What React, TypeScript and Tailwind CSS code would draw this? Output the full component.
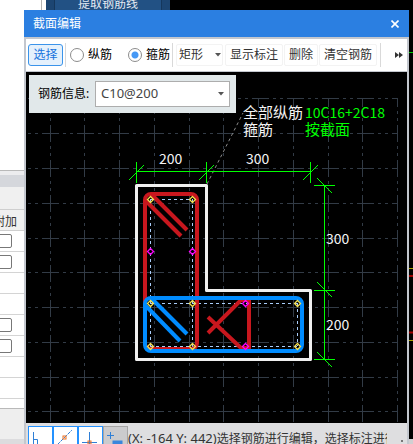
import { useState } from 'react';
import type { ReactNode } from 'react';

/* =========================
   Data
========================= */
const GRID_X = [50, 84, 119, 154, 189, 223, 258, 293, 328, 362, 397];
const GRID_Y = [98, 133, 168, 203, 238, 272, 307, 342, 377, 411];

const CORNER_BARS = [
  [150, 199], [192, 199],
  [150, 303], [192, 303], [297, 303],
  [150, 346], [192, 346], [297, 346],
];
const SIDE_BARS = [[150, 251], [192, 251], [245, 303], [245, 346]];

const ROWS = [true, true, false, false, true, true, false, false];

const UI_FONT = "font-['Noto_Sans','Noto_Sans_CJK_SC',sans-serif]";
const CJK_FONT = "font-['Noto_Sans_CJK_SC',sans-serif]";

/* =========================
   Section drawing
========================= */
function Bars({ at, color }: { at: number[][]; color: string }) {
  return (
    <g stroke={color} strokeWidth="1.3">
      {at.map(([x, y]) => (
        <path key={`${x}-${y}`} d={`M${x + 0.5} ${y - 2.5}l3 3l-3 3l-3 -3z`} />
      ))}
    </g>
  );
}

function SectionDrawing() {
  return (
    <svg
      viewBox="26 72 381 351"
      preserveAspectRatio="xMinYMin meet"
      className={`block h-full w-full ${CJK_FONT}`}
      fill="none"
    >
      {/* grid */}
      <g stroke="#323b46" strokeDasharray="17 4 3 4 3 4" shapeRendering="crispEdges">
        {GRID_Y.map((y) => (
          <path key={y} d={`M26 ${y + 0.5}H397`} strokeDashoffset="19" />
        ))}
        {GRID_X.map((x) => (
          <path key={x} d={`M${x + 0.5} 98V423`} strokeDashoffset="8" />
        ))}
      </g>

      {/* leader */}
      <path d="M207 184L243 113" stroke="#8c8c8c" strokeDasharray="3 3" />

      {/* concrete outline */}
      <path
        d="M136.5 185.5H206.5V290.5H310.5V359.5H136.5Z"
        stroke="#f0f0f0"
        strokeWidth="3"
        strokeLinejoin="round"
      />

      {/* bar centre lines */}
      <g stroke="#a9cdfa" strokeDasharray="3 3" shapeRendering="crispEdges">
        <path d="M150.5 199V346" />
        <path d="M192.5 199V346" />
        <path d="M297.5 303V346" />
        <path d="M150 199.5H192" />
        <path d="M150 303.5H297" />
        <path d="M150 346.5H297" />
      </g>

      {/* stirrups */}
      <g stroke="#c8171e" strokeWidth="4">
        <rect x="145" y="194" width="52" height="155" rx="6" />
        <path d="M146 201L181 236" />
        <path d="M151 194L187 230" />
        <path d="M208 333L241 300H249V348H241L208 317" />
      </g>
      <g stroke="#008cff" strokeWidth="4">
        <rect x="145" y="298" width="157" height="53" rx="6" />
        <path d="M146 306L180 341" />
        <path d="M151 298L187 334" />
      </g>

      {/* longitudinal bars */}
      <Bars at={CORNER_BARS} color="#f5e050" />
      <Bars at={SIDE_BARS} color="#ff00ff" />

      {/* dimensions */}
      <g stroke="#00ff00">
        <path d="M136.5 171.5H310.5M136.5 162V183M206.5 162V183M310.5 162V183" shapeRendering="crispEdges" />
        <path d="M129 180L144 165M199 180L214 165M303 180L318 165" />
        <path d="M324.5 185.5V359.5M314 185.5H335M314 290.5H335M314 359.5H335" shapeRendering="crispEdges" />
        <path d="M317 178L332 193M317 282L332 297M317 352L332 367" />
      </g>

      <g fill="#f4f4f4" fontSize="14">
        <text x="159" y="164">200</text>
        <text x="246" y="164">300</text>
        <text x="326" y="244">300</text>
        <text x="326" y="330">200</text>
      </g>
      <g fill="#f4f4f4" fontSize="15">
        <text x="243" y="118">全部纵筋</text>
        <text x="243" y="135">箍筋</text>
      </g>
      <text x="305" y="118" fill="#00ff00" fontSize="14">10C16+2C18</text>
      <text x="305" y="135" fill="#00ff00" fontSize="15">按截面</text>
    </svg>
  );
}

/* =========================
   Small parts
========================= */
function Caret() {
  return (
    <svg viewBox="0 0 6 4" className="pointer-events-none h-1 w-1.5" fill="#555">
      <path d="M0 0h6L3 3.5z" />
    </svg>
  );
}

function Divider() {
  return <span className="h-6 w-px shrink-0 bg-[#d9d9d9]" />;
}

function ToolButton({ children }: { children: ReactNode }) {
  return (
    <button className="h-[22px] shrink-0 whitespace-nowrap rounded-xs border border-[#f3f3f3] px-1 text-[#333]">
      {children}
    </button>
  );
}

function SnapButton({ label, off, children }: { label: string; off?: boolean; children: ReactNode }) {
  return (
    <button
      aria-label={label}
      className={`h-[26px] w-[25px] shrink-0 border ${
        off ? 'border-[#a5a5a5] bg-[#cbcbcd]' : 'border-[#2492ff] bg-white'
      }`}
    >
      <svg viewBox="0 0 23 24" className="block h-6 w-[23px]" fill="none" stroke="#2f7fd6">
        {children}
      </svg>
    </button>
  );
}

/* =========================
   Windows
========================= */
function SidePanel() {
  return (
    <aside className="flex w-[42px] shrink-0 flex-col overflow-hidden border-r border-[#b4b4b4] bg-white">
      <div className="h-[171px] shrink-0 border-b border-[#b9b9b9]" />
      <div className="h-4 shrink-0 border-t-4 border-[#ececee] bg-[#d5d7dc]" />
      <div className="h-[22px] shrink-0 bg-[#f0f0f0]" />
      <table className="-ml-[14px] w-[38px] shrink-0 table-fixed border-collapse">
        <thead>
          <tr className="h-[21px] border-y border-[#cfcfcf] bg-[#f0f0f0]">
            <th className="whitespace-nowrap p-0 pt-1 text-center text-xs font-normal text-[#333]">附加</th>
          </tr>
        </thead>
        <tbody>
          {ROWS.map((hasBox, i) => (
            <tr key={i} className="h-[21px] border-b border-[#d4d4d4]">
              <td className="p-0 text-center leading-none">
                {hasBox && (
                  <input
                    type="checkbox"
                    aria-label={`附加 ${i + 1}`}
                    className="mx-auto block size-[14px] appearance-none rounded-xs border border-[#777] bg-white"
                  />
                )}
              </td>
            </tr>
          ))}
        </tbody>
      </table>
      <div className="h-[10px] shrink-0 border-b border-[#b9b9b9]" />
      <div className="h-[30px] shrink-0 bg-[#eeeeee]" />
      <div className="flex-1 bg-[#dcdcde]" />
    </aside>
  );
}

function SectionEditor() {
  const [barKind, setBarKind] = useState('stirrup');

  const radio = (value: string, label: string) => (
    <label className="flex shrink-0 items-center gap-1 whitespace-nowrap text-black">
      <input
        type="radio"
        name="bar-kind"
        value={value}
        checked={barKind === value}
        onChange={() => setBarKind(value)}
        className="size-[14px] appearance-none rounded-full border border-[#8c8c8c] bg-white checked:bg-[radial-gradient(circle,#4598f5_3px,white_4px)]"
      />
      {label}
    </label>
  );

  return (
    <section className="absolute top-[10px] right-1 bottom-0 left-6 flex flex-col text-xs">
      {/* Title */}
      <header className="flex h-[27px] shrink-0 items-center justify-between bg-[#2b7fe1] pr-[10px] pl-[9px] text-white">
        <h1>截面编辑</h1>
        <button aria-label="关闭" className="size-2">
          <svg viewBox="0 0 8 8" className="block size-2" stroke="#fff" strokeWidth="1.6">
            <path d="M0.5 0.5l7 7M7.5 0.5l-7 7" />
          </svg>
        </button>
      </header>

      <div className="flex min-h-0 flex-1 flex-col border-x-2 border-[#c3c7ce]">
        {/* Toolbar */}
        <div className="flex h-[35px] shrink-0 items-center border-t-2 border-b border-[#c3c7ce] bg-white pr-1 pl-0.5">
          <button className="h-[22px] w-[35px] shrink-0 rounded-[3px] border border-[#3b94ea] bg-[#e5f1fc] text-[#1874dc]">
            选择
          </button>
          <div className="flex items-center gap-4 px-0.5">
            <div className="flex items-center gap-1">
              <Divider />
              {radio('main', '纵筋')}
            </div>
            {radio('stirrup', '箍筋')}
          </div>
          <Divider />
          <div className="relative mr-0.5 ml-[3px] w-[47px] shrink-0">
            <select
              aria-label="箍筋形状"
              className="block h-[22px] w-full appearance-none rounded-xs border border-[#f3f3f3] pl-0.5 text-[#333]"
            >
              <option>矩形</option>
            </select>
            <span className="pointer-events-none absolute inset-y-0 right-0.5 flex items-center">
              <Caret />
            </span>
          </div>
          <div className="flex gap-px pr-[3px]">
            <ToolButton>显示标注</ToolButton>
            <ToolButton>删除</ToolButton>
            <ToolButton>清空钢筋</ToolButton>
          </div>
          <Divider />
          <button aria-label="更多" className="ml-auto">
            <svg viewBox="0 0 8 6" className="block h-1.5 w-2" fill="#333">
              <path d="M0 0l4 3l-4 3zM4 0l4 3l-4 3z" />
            </svg>
          </button>
        </div>

        {/* Canvas */}
        <div className="relative min-h-0 flex-1 bg-black">
          <SectionDrawing />
          <div className="absolute top-[3px] left-[3px] flex h-[38px] w-[207px] items-center bg-[#e1e8ea] pr-1.5 pl-[9px]">
            <label htmlFor="rebar" className="flex-1 whitespace-nowrap text-black">
              钢筋信息:
            </label>
            <div className="relative w-[135px]">
              <select
                id="rebar"
                className="block h-[26px] w-full appearance-none border border-[#adadad] bg-white pl-[5px] text-[13px] text-[#444]"
              >
                <option>C10@200</option>
              </select>
              <span className="pointer-events-none absolute inset-y-0 right-1.5 flex items-center">
                <Caret />
              </span>
            </div>
          </div>
        </div>

        {/* Status bar */}
        <footer className="flex h-[21px] shrink-0 items-start overflow-hidden bg-[#dedee0] pt-[3px] pl-0.5 text-[#333]">
          <SnapButton label="正交">
            <path d="M4.5 5v12.5h13M4.5 12.5h4v5" />
          </SnapButton>
          <SnapButton label="中点">
            <path d="M3 18L18 3" strokeDasharray="4 1" />
            <rect x="9" y="9" width="3" height="3" stroke="#f07020" />
          </SnapButton>
          <SnapButton label="垂点">
            <path d="M10.5 5v13M3 15.5h15" />
            <rect x="9" y="14" width="3" height="3" stroke="#f07020" />
          </SnapButton>
          <SnapButton label="动态输入" off>
            <path d="M3 8.5h7M6.5 5v7" />
            <rect x="9" y="14" width="9" height="5" fill="#3b86dc" stroke="#3b86dc" />
          </SnapButton>
          <p className="mr-[14px] h-6 flex-1 overflow-hidden whitespace-nowrap text-[13px] leading-6">
            (X: -164 Y: 442)<span className="text-xs">选择钢筋进行编辑，选择标注进行修改</span>
          </p>
          <span className="mt-[14px] mr-1 size-0.5 shrink-0 bg-[#777]" />
        </footer>
      </div>
    </section>
  );
}

/* =========================
   Page
========================= */
export default function App() {
  return (
    <main className={`relative flex h-screen overflow-hidden bg-black ${UI_FONT}`}>
      <SidePanel />

      {/* main window behind the editor */}
      <div className="flex min-w-0 flex-1 flex-col border-l-4 border-white">
        <div className="flex h-[10px] shrink-0 items-end overflow-hidden">
          <button className="flex h-[22px] w-[124px] shrink-0 bg-[#1c4572] px-2 text-xs text-[#e4eaf2]">
            <span className="h-full flex-1 border-x border-[#15375c] bg-[#225184] leading-8">提取钢筋线</span>
          </button>
        </div>
        <svg viewBox="0 0 4 434" className="ml-auto block h-[434px] w-1 shrink-0">
          <path d="M0 42.5h4" stroke="#00c800" />
          <path d="M0 258.5h4M0 330.5h4" stroke="#a8a000" />
          <path d="M0 266h4M0 322.5h4" stroke="#a00000" strokeWidth="2" />
          <path d="M0 429h4v5H0z" fill="#d0d0d2" />
        </svg>
      </div>

      <SectionEditor />
    </main>
  );
}
